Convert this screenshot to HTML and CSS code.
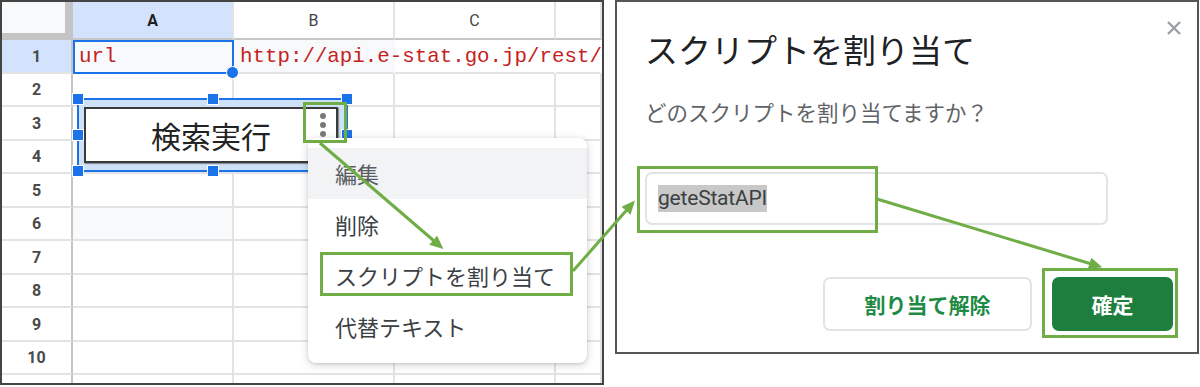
FILE: index.html
```html
<!DOCTYPE html>
<html lang="ja">
<head>
<meta charset="utf-8">
<title>スクリプトを割り当て</title>
<link rel="stylesheet" href="styles.css">
</head>
<body>
<div class="stage">
  <section class="sheet-panel">
    <div class="grid">
      <div class="corner"></div>
      <div class="colh sel">A</div>
      <div class="colh">B</div>
      <div class="colh">C</div>
      <div class="colh"></div>

      <div class="rowh sel">1</div>
      <div class="cell a1"><span class="mono">url</span><span class="fill-handle"></span></div>
      <div class="cell b1 noright"><span class="mono overflow">http://api.e-stat.go.jp/rest/</span></div>
      <div class="cell noright"></div>
      <div class="cell noright"></div>

      <div class="rowh">2</div><div class="cell"></div><div class="cell"></div><div class="cell"></div><div class="cell"></div>
      <div class="rowh">3</div><div class="cell"></div><div class="cell"></div><div class="cell"></div><div class="cell"></div>
      <div class="rowh">4</div><div class="cell"></div><div class="cell"></div><div class="cell"></div><div class="cell"></div>
      <div class="rowh">5</div><div class="cell"></div><div class="cell"></div><div class="cell"></div><div class="cell"></div>
      <div class="rowh">6</div><div class="cell shade"></div><div class="cell"></div><div class="cell"></div><div class="cell"></div>
      <div class="rowh">7</div><div class="cell"></div><div class="cell"></div><div class="cell"></div><div class="cell"></div>
      <div class="rowh">8</div><div class="cell"></div><div class="cell"></div><div class="cell"></div><div class="cell"></div>
      <div class="rowh">9</div><div class="cell"></div><div class="cell"></div><div class="cell"></div><div class="cell"></div>
      <div class="rowh">10</div><div class="cell"></div><div class="cell"></div><div class="cell"></div><div class="cell"></div>
      <div class="rowh"></div><div class="cell"></div><div class="cell"></div><div class="cell"></div><div class="cell"></div>
    </div>

    <div class="drawing">
      <div class="drawn-button">
        <span class="drawn-label">検索実行</span>
        <span class="kebab"><i></i><i></i><i></i></span>
      </div>
      <span class="h h-tl"></span><span class="h h-tc"></span><span class="h h-tr"></span>
      <span class="h h-ml"></span><span class="h h-mr"></span>
      <span class="h h-bl"></span><span class="h h-bc"></span><span class="h h-br"></span>
    </div>

    <ul class="menu">
      <li class="menu-item hover">編集</li>
      <li class="menu-item">削除</li>
      <li class="menu-item">スクリプトを割り当て</li>
      <li class="menu-item">代替テキスト</li>
    </ul>
  </section>

  <section class="dialog">
    <header class="dlg-head">
      <h1 class="dlg-title">スクリプトを割り当て</h1>
      <span class="dlg-close"><svg width="16" height="16" viewBox="0 0 16 16"><path d="M2 2 L14 14 M14 2 L2 14" stroke="#9aa0a6" stroke-width="2.4" fill="none"/></svg></span>
    </header>
    <p class="dlg-sub">どのスクリプトを割り当てますか？</p>
    <div class="dlg-input"><span class="sel-text">geteStatAPI</span></div>
    <div class="dlg-actions">
      <button class="btn btn-outline">割り当て解除</button>
      <button class="btn btn-primary">確定</button>
    </div>
  </section>

  <svg class="annotations" width="1200" height="387" viewBox="0 0 1200 387">
    <defs>
      <marker id="ah" markerWidth="4.5" markerHeight="4" refX="3" refY="2" orient="auto" markerUnits="strokeWidth">
        <path d="M0,0 L4.5,2 L0,4 z" fill="#70ad47"/>
      </marker>
    </defs>
    <g fill="none" stroke="#70ad47" stroke-width="3">
      <rect x="304.5" y="103.5" width="41" height="38"/>
      <rect x="321.5" y="253.5" width="250" height="41"/>
      <rect x="638.5" y="167.5" width="238" height="64"/>
      <rect x="1043.5" y="269.5" width="133" height="67"/>
      <line x1="320" y1="143" x2="440" y2="246" marker-end="url(#ah)"/>
      <line x1="573" y1="271" x2="632" y2="204" marker-end="url(#ah)"/>
      <line x1="877" y1="199" x2="1098" y2="266" marker-end="url(#ah)"/>
    </g>
  </svg>
</div>
</body>
</html>
```

FILE: styles.css
```css
* { box-sizing: border-box; margin: 0; padding: 0; }

body {
  width: 1200px;
  height: 387px;
  background: #fff;
  overflow: hidden;
  font-family: Roboto, "Noto Sans CJK JP", sans-serif;
}

.stage {
  position: relative;
  display: flex;
  align-items: flex-start;
  gap: 11px;
  width: 1200px;
  height: 387px;
}

/* ---------- spreadsheet panel ---------- */
.sheet-panel {
  position: relative;
  width: 604px;
  height: 385px;
  border: 2px solid #444;
  overflow: hidden;
  background: #fff;
  flex: none;
}

.grid {
  display: grid;
  grid-template-columns: 71px 161px 161px 161px 46px;
  grid-template-rows: 38px repeat(5, 34px 33px) 20px;
}

.grid > div {
  display: flex;
  align-items: center;
  min-width: 0;
  border-right: 2px solid #e3e3e3;
  border-bottom: 2px solid #e3e3e3;
}

.grid > .corner {
  background: #f8f9fa;
  border-right: 8px solid #c4c4c4;
  border-bottom: 7px solid #c4c4c4;
}

.grid > .colh {
  justify-content: center;
  border-bottom-color: #c7c7c7;
  font-size: 16px;
  color: #444;
}

.grid > .colh.sel {
  background: #d3e3fd;
  font-weight: 700;
  color: #1f1f1f;
}

.grid > .rowh {
  justify-content: center;
  border-right-color: #c4c4c4;
  font-size: 16px;
  font-weight: 700;
  color: #4a4a4a;
}

.grid > .rowh.sel { background: #d3e3fd; }

.grid > .noright { border-right-color: transparent; }

.grid > .shade { background: #f8f9fa; }

.a1 {
  position: relative;
  background: #f7f9fc;
  outline: 2px solid #1a73e8;
  outline-offset: -2px;
  padding-left: 6px;
}

.b1 {
  background: #f8f9fa;
  padding-left: 6px;
}

.mono {
  font-family: "Liberation Mono", monospace;
  font-size: 20.8px;
  color: #c5221f;
  white-space: nowrap;
}

.overflow {
  position: relative;
  z-index: 1;
  flex: none;
}

.fill-handle {
  position: absolute;
  right: -7px;
  bottom: -7px;
  width: 13px;
  height: 13px;
  border-radius: 50%;
  background: #1a73e8;
  border: 1px solid #fff;
  z-index: 3;
}

/* ---------- drawing (button) ---------- */
.drawing {
  position: absolute;
  left: 75px;
  top: 96px;
  width: 271px;
  height: 74px;
  border: 2px solid #1a73e8;
  background: #cfe1f6;
  padding: 7px 8px 7px 5px;
  z-index: 4;
}

.drawn-button {
  position: relative;
  width: 100%;
  height: 100%;
  display: flex;
  align-items: center;
  justify-content: center;
  background: #fff;
  border: 2px solid #3a3a3a;
  box-shadow: 1px 1px 1px rgba(0, 0, 0, 0.35);
}

.drawn-label {
  font-family: "Noto Sans CJK JP", sans-serif;
  font-size: 30px;
  line-height: 1;
  color: #222;
}

.kebab {
  position: absolute;
  right: 10px;
  top: 4px;
  display: flex;
  flex-direction: column;
  gap: 3px;
}

.kebab i {
  display: block;
  width: 6px;
  height: 6px;
  border-radius: 50%;
  background: #7a7a7a;
}

.h {
  position: absolute;
  width: 12px;
  height: 12px;
  background: #1a73e8;
  border: 1px solid #fff;
}
.h-tl { left: -7px;  top: -7px; }
.h-tc { left: 128px; top: -7px; }
.h-tr { right: -7px; top: -7px; }
.h-ml { left: -7px;  top: 29px; }
.h-mr { right: -7px; top: 29px; }
.h-bl { left: -7px;  bottom: -7px; }
.h-bc { left: 128px; bottom: -7px; }
.h-br { right: -7px; bottom: -7px; }

/* ---------- context menu ---------- */
.menu {
  position: absolute;
  left: 306px;
  top: 136px;
  width: 279px;
  height: 225px;
  list-style: none;
  padding: 10px 0 11px;
  background: #fff;
  border-radius: 8px;
  box-shadow: 0 2px 10px rgba(0, 0, 0, 0.16), 0 1px 3px rgba(0, 0, 0, 0.12);
  z-index: 5;
}

.menu-item {
  height: 51px;
  line-height: 51px;
  padding-left: 27px;
  font-family: "Noto Sans CJK JP", sans-serif;
  font-size: 22px;
  color: #3c4043;
}

.menu-item.hover {
  background: #f1f3f4;
  color: #5a5e62;
}

/* ---------- dialog ---------- */
.dialog {
  display: flex;
  flex-direction: column;
  width: 584px;
  height: 354px;
  border: 2px solid #555;
  background: #fff;
  padding: 18px 0 0 28px;
  flex: none;
  font-family: "Noto Sans CJK JP", sans-serif;
}

.dlg-head {
  display: flex;
  justify-content: space-between;
  align-items: flex-start;
  padding-right: 15px;
}

.dlg-title {
  margin-top: 9px;
  font-size: 33px;
  line-height: 40px;
  font-weight: 400;
  color: #202124;
}

.dlg-close {
  display: block;
  width: 16px;
  height: 16px;
}

.dlg-close svg { display: block; }

.dlg-sub {
  margin-top: 28px;
  font-size: 21.5px;
  line-height: 30px;
  color: #5f6368;
}

.dlg-input {
  margin-top: 45px;
  width: 463px;
  height: 53px;
  border: 2px solid #e2e3e5;
  border-radius: 7px;
  display: flex;
  align-items: center;
  padding-left: 11px;
}

.sel-text {
  font-family: Roboto, sans-serif;
  font-size: 21px;
  line-height: 27px;
  color: #3c4043;
  background: #c8c8c8;
  letter-spacing: -0.2px;
}

.dlg-actions {
  margin-top: 52px;
  display: flex;
  justify-content: flex-end;
  gap: 20px;
  padding-right: 24px;
}

.btn {
  height: 54px;
  border-radius: 7px;
  font-family: "Noto Sans CJK JP", sans-serif;
  font-size: 21px;
  font-weight: 700;
  display: flex;
  align-items: center;
  justify-content: center;
}

.btn-outline {
  width: 209px;
  background: #fff;
  border: 2px solid #e2e3e5;
  color: #1e8a44;
}

.btn-primary {
  width: 121px;
  background: #1e7e3e;
  border: none;
  color: #fff;
}

/* ---------- annotations ---------- */
.annotations {
  position: absolute;
  left: 0;
  top: 0;
  z-index: 10;
  pointer-events: none;
}
```
